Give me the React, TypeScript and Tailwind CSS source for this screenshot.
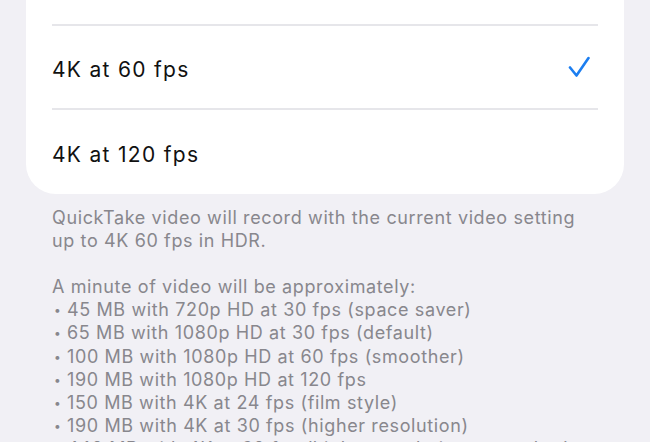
import React from 'react';

const rows = [
  { label: '4K at 60 fps', selected: true },
  { label: '4K at 120 fps', selected: false },
];

const sizes = [
  '45 MB with 720p HD at 30 fps (space saver)',
  '65 MB with 1080p HD at 30 fps (default)',
  '100 MB with 1080p HD at 60 fps (smoother)',
  '190 MB with 1080p HD at 120 fps',
  '150 MB with 4K at 24 fps (film style)',
  '190 MB with 4K at 30 fps (higher resolution)',
  '440 MB with 4K at 60 fps (higher resolution, smoother)',
];

const Check = () => (
  <svg width="22" height="22" viewBox="0 0 22 22" fill="none">
    <path d="M2 11.5 L8.5 19.5 L20.5 2" stroke="#1c7ef0" strokeWidth="2.6" strokeLinecap="round" strokeLinejoin="round" />
  </svg>
);

export default function App() {
  return (
    <div className="h-[442px] w-[650px] overflow-hidden bg-[#f1f0f5] font-['Inter','Liberation_Sans',sans-serif]">
      {/* Frame rate list (scrolled, top of card is above the view) */}
      <div className="mx-[26px] rounded-b-[30px] bg-white px-[26px]">
        <div className="h-[26px] border-b-2 border-[#e6e6ea]" />
        {rows.map((row, i) => (
          <div
            key={row.label}
            className={
              'flex h-[84px] items-center justify-between pt-[5px] ' +
              (i < rows.length - 1 ? 'border-b-2 border-[#e6e6ea]' : '')
            }
          >
            <span className="text-[21px] tracking-[1.3px] text-[#111]">{row.label}</span>
            {row.selected && (
              <span className="mr-[8px] -mt-[5px]">
                <Check />
              </span>
            )}
          </div>
        ))}
      </div>

      {/* Footer */}
      <div className="mt-[12px] px-[52px] text-[18px] leading-[23.1px] tracking-[0.62px] text-[#88878d]">
        <p>QuickTake video will record with the current video setting up to 4K 60 fps in HDR.</p>
        <p className="mt-[23.1px]">A minute of video will be approximately:</p>
        <ul>
          {sizes.map((s) => (
            <li key={s} className="flex h-[23.1px] items-baseline whitespace-nowrap">
              <span className="w-[15px] shrink-0 -translate-y-[2px] pl-[2px] text-[12px] leading-none">•</span>
              <span>{s}</span>
            </li>
          ))}
        </ul>
      </div>
    </div>
  );
}
